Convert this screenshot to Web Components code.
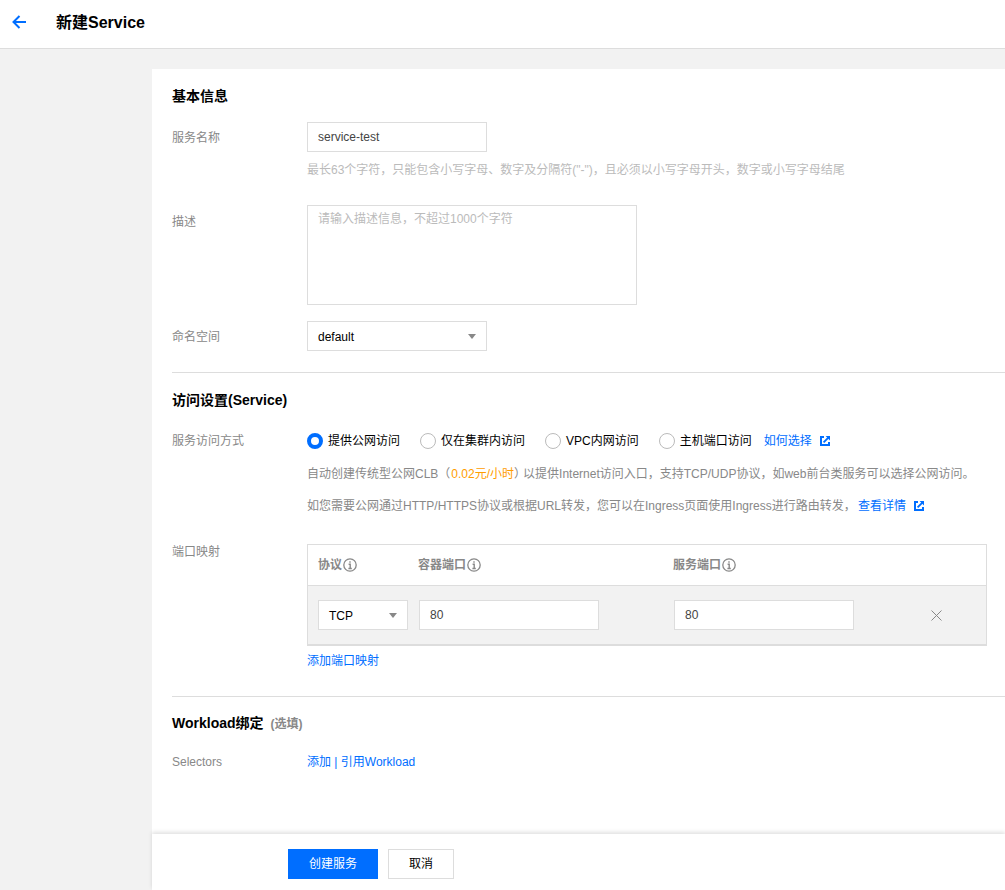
<!DOCTYPE html>
<html lang="zh-CN">
<head>
<meta charset="utf-8">
<title>新建Service</title>
<style>
  html, body { margin: 0; height: 100%; }
  body {
    background: #f2f2f2;
    color: #000;
    font: 12px/18px "Liberation Sans", "Noto Sans CJK SC", sans-serif;
    overflow: hidden;
  }
</style>
</head>
<body>

<service-page>
  <page-header slot="header">新建Service</page-header>

  <form-section title="基本信息" first>
    <form-row label="服务名称" label-height="32">
      <text-box>service-test</text-box>
      <hint-line>最长63个字符，只能包含小写字母、数字及分隔符("-")，且必须以小写字母开头，数字或小写字母结尾</hint-line>
    </form-row>
    <form-row label="描述" label-height="34" style="margin-top:26px">
      <text-box multiline placeholder>请输入描述信息，不超过1000个字符</text-box>
    </form-row>
    <form-row label="命名空间" label-height="32" style="margin-top:16px">
      <select-box>default</select-box>
    </form-row>
  </form-section>

  <form-section title="访问设置(Service)" style="--title-top:17px">
    <form-row label="服务访问方式" label-height="20" style="margin-top:21px">
      <radio-group>
        <radio-option checked>提供公网访问</radio-option>
        <radio-option>仅在集群内访问</radio-option>
        <radio-option>VPC内网访问</radio-option>
        <radio-option>主机端口访问</radio-option>
        <ext-link style="margin-left:-8px">如何选择</ext-link>
      </radio-group>
      <hint-line tone="muted" style="margin-top:14px">自动创建传统型公网CLB（<span style="color:#ff9d00;margin-left:1px">0.02元/小时</span><span style="font-feature-settings:'halt';margin-right:3px">）</span>以提供Internet访问入口，支持TCP/UDP协议，如web前台类服务可以选择公网访问。</hint-line>
      <hint-line tone="muted" style="margin-top:14px">如您需要公网通过HTTP/HTTPS协议或根据URL转发，您可以在Ingress页面使用Ingress进行路由转发， <ext-link style="margin-left:-1px">查看详情</ext-link></hint-line>
    </form-row>
    <form-row label="端口映射" label-height="16" style="margin-top:29px;margin-bottom:5px">
      <port-table></port-table>
      <a-link style="margin-top:6px">添加端口映射</a-link>
    </form-row>
  </form-section>

  <form-section title="Workload绑定" note="(选填)">
    <form-row label="Selectors" label-height="20" style="margin-top:18px">
      <div style="line-height:20px;color:#006eff"><a-link>添加</a-link> | <a-link>引用Workload</a-link></div>
    </form-row>
  </form-section>

  <page-footer slot="footer"></page-footer>
</service-page>

<script>
class ServicePage extends HTMLElement {
  constructor() {
    super()
    this.attachShadow({mode: "open"})
    this.shadowRoot.innerHTML = `
    <style>
      :host { display: flex; flex-direction: column; height: 890px; }
      main { flex: 1; min-height: 0; padding: 20px 0 0 152px; display: flex; }
      .card { flex: 1; min-width: 0; background: #fff; display: flex; flex-direction: column; }
      .body { flex: 1; padding-left: 20px; }
    </style>
    <slot name="header"></slot>
    <main>
      <div class="card">
        <div class="body"><slot></slot></div>
        <slot name="footer"></slot>
      </div>
    </main>`
  }
}

class PageHeader extends HTMLElement {
  constructor() {
    super()
    this.attachShadow({mode: "open"})
    this.shadowRoot.innerHTML = `
    <style>
      :host {
        display: flex; align-items: center; flex: none; box-sizing: content-box;
        height: 46px; padding-bottom: 2px; background: #fff; border-bottom: 1px solid #ddd;
        font-size: 16px; font-weight: bold; color: #000;
      }
      svg { display: block; margin: 0 30px 2px 12px; }
    </style>
    <svg width="14" height="14" viewBox="0 0 14 14" fill="none" stroke="#006eff" stroke-width="2">
      <path d="M14 7H1.5M7.5 1L1.5 7l6 6"/>
    </svg>
    <slot></slot>`
  }
}

class FormSection extends HTMLElement {
  constructor() {
    super()
    this.attachShadow({mode: "open"})
    const note = this.getAttribute("note")
    this.shadowRoot.innerHTML = `
    <style>
      :host { display: block; }
      :host(:not([first])) { border-top: 1px solid #ddd; }
      h3 { margin: 0; font-size: 14px; line-height: 20px; font-weight: bold; color: #000; padding-top: var(--title-top, 16px); }
      :host([first]) h3 { padding-top: 17px; }
      small { font-size: 12px; color: #888; margin-left: 7px; }
      .gap { height: 21px; }
    </style>
    <h3>${this.getAttribute("title")}${note ? `<small>${note}</small>` : ""}</h3>
    <slot></slot>
    <div class="gap"></div>`
    this.removeAttribute("title")
  }
}

class FormRow extends HTMLElement {
  constructor() {
    super()
    this.attachShadow({mode: "open"})
    const h = this.getAttribute("label-height") || 30
    this.shadowRoot.innerHTML = `
    <style>
      :host { display: flex; margin-top: 16px; }
      label { flex: none; width: 135px; height: 14px; color: #888; line-height: ${h}px; }
      .ctl { flex: 1; min-width: 0; display: flex; flex-direction: column; align-items: flex-start; }
    </style>
    <label>${this.getAttribute("label")}</label>
    <div class="ctl"><slot></slot></div>`
  }
}

class TextBox extends HTMLElement {
  constructor() {
    super()
    this.attachShadow({mode: "open"})
    this.shadowRoot.innerHTML = `
    <style>
      :host {
        display: block; box-sizing: border-box; flex: none;
        width: 180px; height: 30px; padding: 0 10px;
        background: #fff; border: 1px solid #ddd;
        color: #444; line-height: 28px;
      }
      :host([multiline]) { width: 330px; height: 100px; line-height: 26px; }
      :host([placeholder]) { color: #bbb; }
    </style>
    <slot></slot>`
  }
}

class SelectBox extends HTMLElement {
  constructor() {
    super()
    this.attachShadow({mode: "open"})
    this.shadowRoot.innerHTML = `
    <style>
      :host {
        display: flex; align-items: center; justify-content: space-between; box-sizing: border-box; flex: none;
        width: 180px; height: 30px; padding: 0 10px;
        background: #fff; border: 1px solid #ddd; color: #000;
      }
      span { display: block; padding-top: 2px; }
      i { width: 0; height: 0; border: 4px solid transparent; border-top: 5px solid #888; border-bottom: 0; }
    </style>
    <span><slot></slot></span><i></i>`
  }
}

class HintLine extends HTMLElement {
  constructor() {
    super()
    this.attachShadow({mode: "open"})
    this.shadowRoot.innerHTML = `
    <style>
      :host { display: block; margin-top: 9px; color: #bbb; line-height: 18px; white-space: nowrap; }
      :host([tone="muted"]) { color: #888; }
    </style>
    <slot></slot>`
  }
}

class RadioGroup extends HTMLElement {
  constructor() {
    super()
    this.attachShadow({mode: "open"})
    this.shadowRoot.innerHTML = `
    <style>:host { display: flex; align-items: center; gap: 20px; height: 20px; white-space: nowrap; }</style>
    <slot></slot>`
  }
}

class RadioOption extends HTMLElement {
  constructor() {
    super()
    this.attachShadow({mode: "open"})
    this.shadowRoot.innerHTML = `
    <style>
      :host { display: flex; align-items: center; gap: 5px; color: #000; }
      i { box-sizing: border-box; width: 16px; height: 16px; border-radius: 50%; border: 1px solid #bbb; background: #fff; }
      :host([checked]) i { border: 4px solid #006eff; }
    </style>
    <i></i><slot></slot>`
  }
}

class ALink extends HTMLElement {
  constructor() {
    super()
    this.attachShadow({mode: "open"})
    this.shadowRoot.innerHTML = `
    <style>:host { display: inline; color: #006eff; }</style>
    <slot></slot>`
  }
}

class ExtLink extends HTMLElement {
  constructor() {
    super()
    this.attachShadow({mode: "open"})
    this.shadowRoot.innerHTML = `
    <style>
      :host { display: inline-flex; align-items: center; gap: 8px; color: #006eff; vertical-align: top; }
      svg { display: block; }
    </style>
    <slot></slot>
    <svg width="10" height="10" viewBox="0 0 10 10" fill="none" stroke="#006eff">
      <path stroke-width="2" d="M4 1H1v8h8V6"/>
      <path stroke-width="1.8" d="M3.6 6.4L8.6 1.4"/>
      <path fill="#006eff" stroke="none" d="M5.6 0H10v4.4z"/>
    </svg>`
  }
}

class PortTable extends HTMLElement {
  constructor() {
    super()
    this.attachShadow({mode: "open"})
    const info = `<svg width="14" height="14" viewBox="0 0 14 14" fill="none" stroke="#888">
      <circle cx="7" cy="7" r="6.2" stroke-width="1.3"/>
      <path stroke-width="1.4" d="M7 3.2v1.5M5.6 6.3H7.2v4.2M5.4 10.5h3.4"/></svg>`
    this.shadowRoot.innerHTML = `
    <style>
      :host { display: block; box-sizing: border-box; width: 680px; border: 1px solid #ddd; border-bottom-width: 2px; }
      .head, .row { display: grid; padding-left: 10px; align-items: center; }
      .head { grid-template-columns: 100px 255px 1fr; height: 40px; border-bottom: 1px solid #ddd; color: #888; font-weight: bold; }
      .head span { display: flex; align-items: center; gap: 1px; }
      .row { grid-template-columns: 101px 255px 180px 1fr; height: 58px; background: #f2f2f2; }
      .close { display: block; margin-left: 77px; }
    </style>
    <div class="head">
      <span>协议${info}</span>
      <span>容器端口${info}</span>
      <span>服务端口${info}</span>
    </div>
    <div class="row">
      <select-box style="width:90px">TCP</select-box>
      <text-box>80</text-box>
      <text-box>80</text-box>
      <svg class="close" width="11" height="11" viewBox="0 0 11 11" stroke="#888" fill="none"><path d="M.5.5l10 10M10.5.5l-10 10"/></svg>
    </div>`
  }
}

class PageFooter extends HTMLElement {
  constructor() {
    super()
    this.attachShadow({mode: "open"})
    this.shadowRoot.innerHTML = `
    <style>
      :host {
        display: flex; flex: none; gap: 10px; box-sizing: border-box;
        height: 56px; padding: 15px 0 0 136px; background: #fff;
        box-shadow: 0 -2px 4px rgba(0,0,0,.12);
      }
      button {
        box-sizing: border-box; height: 30px; padding: 0; font: inherit; cursor: pointer;
        border: 1px solid #ddd; background: #fff; color: #000; width: 66px;
      }
      .primary { width: 90px; background: #006eff; border-color: #006eff; color: #fff; }
    </style>
    <button class="primary">创建服务</button>
    <button>取消</button>`
  }
}

customElements.define("service-page", ServicePage)
customElements.define("page-header", PageHeader)
customElements.define("form-section", FormSection)
customElements.define("form-row", FormRow)
customElements.define("text-box", TextBox)
customElements.define("select-box", SelectBox)
customElements.define("hint-line", HintLine)
customElements.define("radio-group", RadioGroup)
customElements.define("radio-option", RadioOption)
customElements.define("a-link", ALink)
customElements.define("ext-link", ExtLink)
customElements.define("port-table", PortTable)
customElements.define("page-footer", PageFooter)
</script>
</body>
</html>
